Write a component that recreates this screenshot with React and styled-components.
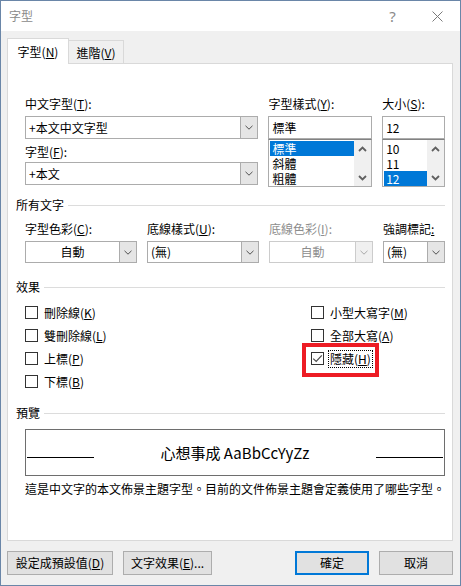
import React from 'react';
import styled, { createGlobalStyle, css } from 'styled-components';

const GlobalStyle = createGlobalStyle`
  html, body { margin: 0; padding: 0; background: #ffffff; }
  body {
    font-family: "Noto Sans CJK TC", "Noto Sans", sans-serif;
    font-size: 12px;
    color: #000;
  }
  * { box-sizing: border-box; }
`;

const Window = styled.div`
  width: 461px;
  height: 586px;
  border: 1px solid #6a86a8;
  background: #f0f0f0;
  display: flex;
  flex-direction: column;
`;

const TitleBar = styled.div`
  height: 30px;
  background: #fff;
  display: flex;
  align-items: center;
  padding-left: 8px;
`;

const Title = styled.div`
  color: #8a8a8a;
  font-size: 12px;
  line-height: 16px;
`;

const Captions = styled.div`
  margin-left: auto;
  display: flex;
  height: 100%;
`;

const CaptionButton = styled.div`
  width: 45px;
  height: 100%;
  display: flex;
  align-items: center;
  justify-content: center;
  color: #8a8a8a;
  font-family: "Noto Sans", sans-serif;
  font-size: 15px;
  line-height: 16px;
`;

const Body = styled.div`
  flex: 1;
  display: flex;
  flex-direction: column;
  padding: 7px 7px 0 6px;
`;

const TabStrip = styled.div`
  height: 25px;
  display: flex;
  align-items: flex-end;
  position: relative;
  z-index: 1;
`;

const Tab = styled.div`
  height: ${p => (p.$active ? '26px' : '23px')};
  width: ${p => (p.$active ? '62px' : '56px')};
  margin-bottom: ${p => (p.$active ? '-1px' : '0')};
  margin-left: ${p => (p.$active ? '0' : '-1px')};
  background: ${p => (p.$active ? '#ffffff' : '#f0f0f0')};
  border: 1px solid #d9d9d9;
  border-bottom: none;
  display: flex;
  align-items: center;
  justify-content: center;
  line-height: 16px;
  position: relative;
  z-index: ${p => (p.$active ? 2 : 1)};
  padding-top: ${p => (p.$active ? '0' : '1px')};
`;

const Key = styled.span`
  text-decoration: underline;
  text-underline-offset: 1px;
`;

const Panel = styled.div`
  height: 478px;
  background: #fff;
  border: 1px solid #d9d9d9;
  padding: 32px 7px 0 8px;
  display: flex;
  flex-direction: column;
`;

const Indented = styled.div`
  margin-left: 9px;
`;

const FontSection = styled(Indented)`
  display: flex;
  gap: 10px;
  height: 91px;
`;

const Column = styled.div`
  width: ${p => p.$w}px;
  display: flex;
  flex-direction: column;
`;

const Label = styled.div`
  height: 16px;
  line-height: 16px;
  white-space: nowrap;
  color: ${p => (p.$disabled ? '#8d8d8d' : '#000')};
  margin-top: ${p => p.$mt || 0}px;
`;

const fieldBase = css`
  height: ${p => p.$h || 23}px;
  border: 1px solid ${p => (p.$disabled ? '#cccccc' : '#acacac')};
  background: #fff;
  display: flex;
  align-items: stretch;
  line-height: 16px;
`;

const TextBox = styled.div`
  ${fieldBase};
  margin-top: ${p => p.$mt || 0}px;
  padding-left: 3px;
  align-items: center;
`;

const Combo = styled.div`
  ${fieldBase};
  margin-top: ${p => p.$mt || 0}px;
`;

const ComboText = styled.div`
  flex: 1;
  display: flex;
  align-items: center;
  justify-content: ${p => (p.$center ? 'center' : 'flex-start')};
  padding-left: ${p => (p.$center ? 0 : 3)}px;
  color: ${p => (p.$disabled ? '#8d8d8d' : '#000')};
  white-space: nowrap;
  overflow: hidden;
`;

const DropButton = styled.div`
  width: 17px;
  flex: none;
  background: ${p => (p.$disabled ? '#f0f0f0' : '#e5e5e5')};
  border-left: 1px solid ${p => (p.$disabled ? '#cccccc' : '#acacac')};
  display: flex;
  align-items: center;
  justify-content: center;
`;

const ListBox = styled.div`
  height: 48px;
  border: 1px solid #acacac;
  border-top-color: #828282;
  display: flex;
  padding: 1px 0 1px 1px;
`;

const ListItems = styled.div`
  flex: 1;
  display: flex;
  flex-direction: column;
`;

const ListItem = styled.div`
  height: 15px;
  line-height: 15px;
  padding-left: 2px;
  background: ${p => (p.$selected ? '#0078d7' : 'transparent')};
  color: ${p => (p.$selected ? '#fff' : '#000')};
`;

const ScrollBar = styled.div`
  width: 17px;
  margin: -1px 0;
  background: #f0f0f0;
  display: flex;
  flex-direction: column;
  justify-content: space-between;
  align-items: center;
  padding: 6px 0 5px;
`;

const SectionHeader = styled.div`
  display: flex;
  align-items: center;
  gap: 4px;
  height: 16px;
  line-height: 16px;
  margin-top: ${p => p.$mt}px;
  &::after {
    content: '';
    flex: 1;
    height: 1px;
    background: #dcdcdc;
  }
`;

const FieldRow = styled(Indented)`
  display: flex;
  gap: 10px;
  margin-top: 8px;
`;

const EffectsGrid = styled(Indented)`
  display: grid;
  grid-template-columns: 286px 1fr;
  margin-top: 6px;
`;

const EffectColumn = styled.div`
  display: flex;
  flex-direction: column;
`;

const CheckRow = styled.div`
  height: 23px;
  display: flex;
  align-items: center;
  gap: 5px;
  position: relative;
`;

const Box = styled.div`
  width: 13px;
  height: 13px;
  border: 1px solid #333;
  background: #fff;
  display: flex;
  align-items: center;
  justify-content: center;
  flex: none;
`;

const CheckLabel = styled.span`
  line-height: 16px;
  white-space: nowrap;
  padding: 0 1px;
  outline: ${p => (p.$focus ? '1px dotted #000' : 'none')};
  outline-offset: 0;
`;

const Highlight = styled.div`
  position: absolute;
  left: -9px;
  top: -4px;
  width: 77px;
  height: 34px;
  border: 4px solid #ed1c24;
  pointer-events: none;
`;

const PreviewBox = styled(Indented)`
  margin-top: 8px;
  height: 47px;
  border: 1px solid #6e6e6e;
  display: flex;
  align-items: center;
  padding: 0 1px;
`;

const PreviewLine = styled.div`
  width: 67px;
  height: 1px;
  background: #000;
  margin-top: 10px;
  flex: none;
`;

const PreviewText = styled.div`
  flex: 1;
  text-align: center;
  font-size: 15px;
  line-height: 18px;
  margin-top: 1px;
`;

const Description = styled(Indented)`
  margin-top: 5px;
  line-height: 16px;
  white-space: nowrap;
`;

const ButtonRow = styled.div`
  display: flex;
  gap: 10px;
  margin-top: 10px;
`;

const Button = styled.div`
  width: ${p => p.$w}px;
  height: 24px;
  border: ${p => (p.$default ? '2px solid #0078d7' : '1px solid #adadad')};
  background: #e1e1e1;
  display: flex;
  align-items: center;
  justify-content: center;
  line-height: 16px;
  white-space: nowrap;
  margin-left: ${p => (p.$push ? 'auto' : '0')};
`;

const ComboChevron = ({ disabled }) => (
  <svg width="8" height="5" viewBox="0 0 8 5">
    <path d="M0.5 0.8 L4 4.2 L7.5 0.8" fill="none" stroke={disabled ? '#a8a8a8' : '#505050'} strokeWidth="1" />
  </svg>
);

const ScrollArrow = ({ up }) => (
  <svg width="9" height="6" viewBox="0 0 9 6">
    <path
      d={up ? 'M1 5 L4.5 1.5 L8 5' : 'M1 1 L4.5 4.5 L8 1'}
      fill="none"
      stroke="#606060"
      strokeWidth="1.8"
    />
  </svg>
);

const DropCombo = ({ children, center, disabled, h, mt }) => (
  <Combo $disabled={disabled} $h={h} $mt={mt}>
    <ComboText $center={center} $disabled={disabled}>{children}</ComboText>
    <DropButton $disabled={disabled}>
      <ComboChevron disabled={disabled} />
    </DropButton>
  </Combo>
);

const List = ({ items, selected }) => (
  <ListBox>
    <ListItems>
      {items.map(it => (
        <ListItem key={it} $selected={it === selected}>{it}</ListItem>
      ))}
    </ListItems>
    <ScrollBar>
      <ScrollArrow up />
      <ScrollArrow />
    </ScrollBar>
  </ListBox>
);

const Check = ({ checked, label, k, focus, highlight }) => (
  <CheckRow>
    <Box>
      {checked && (
        <svg width="11" height="11" viewBox="0 0 11 11">
          <path d="M1.2 5.6 L4.2 8.4 L9.8 2.4" fill="none" stroke="#4a4a4a" strokeWidth="1.2" />
        </svg>
      )}
    </Box>
    <CheckLabel $focus={focus}>
      {label}(<Key>{k}</Key>)
    </CheckLabel>
    {highlight && <Highlight />}
  </CheckRow>
);

export default function App() {
  return (
    <>
      <GlobalStyle />
      <Window>
        <TitleBar>
          <Title>字型</Title>
          <Captions>
            <CaptionButton>?</CaptionButton>
            <CaptionButton>
              <svg width="11" height="11" viewBox="0 0 11 11">
                <path d="M0.5 0.5 L10.5 10.5 M10.5 0.5 L0.5 10.5" stroke="#7a7a7a" strokeWidth="1" />
              </svg>
            </CaptionButton>
          </Captions>
        </TitleBar>
        <Body>
          <TabStrip>
            <Tab $active>字型(<Key>N</Key>)</Tab>
            <Tab>進階(<Key>V</Key>)</Tab>
          </TabStrip>
          <Panel>
            <FontSection>
              <Column $w={234}>
                <Label>中文字型(<Key>T</Key>):</Label>
                <DropCombo mt={4}>+本文中文字型</DropCombo>
                <Label $mt={5}>字型(<Key>F</Key>):</Label>
                <DropCombo mt={2}>+本文</DropCombo>
              </Column>
              <Column $w={104}>
                <Label>字型樣式(<Key>Y</Key>):</Label>
                <TextBox $mt={4}>標準</TextBox>
                <List items={['標準', '斜體', '粗體']} selected="標準" />
              </Column>
              <Column $w={63}>
                <Label>大小(<Key>S</Key>):</Label>
                <TextBox $mt={4}>12</TextBox>
                <List items={['10', '11', '12']} selected="12" />
              </Column>
            </FontSection>

            <SectionHeader $mt={10}>所有文字</SectionHeader>
            <FieldRow>
              <Column $w={112}>
                <Label>字型色彩(<Key>C</Key>):</Label>
                <DropCombo center h={22} mt={4}>自動</DropCombo>
              </Column>
              <Column $w={112}>
                <Label>底線樣式(<Key>U</Key>):</Label>
                <DropCombo h={22} mt={4}>(無)</DropCombo>
              </Column>
              <Column $w={104}>
                <Label $disabled>底線色彩(<Key>I</Key>):</Label>
                <DropCombo center disabled h={22} mt={4}>自動</DropCombo>
              </Column>
              <Column $w={62}>
                <Label>強調標記<Key>:</Key></Label>
                <DropCombo h={22} mt={4}>(無)</DropCombo>
              </Column>
            </FieldRow>

            <SectionHeader $mt={16}>效果</SectionHeader>
            <EffectsGrid>
              <EffectColumn>
                <Check label="刪除線" k="K" />
                <Check label="雙刪除線" k="L" />
                <Check label="上標" k="P" />
                <Check label="下標" k="B" />
              </EffectColumn>
              <EffectColumn>
                <Check label="小型大寫字" k="M" />
                <Check label="全部大寫" k="A" />
                <Check label="隱藏" k="H" checked focus highlight />
              </EffectColumn>
            </EffectsGrid>

            <SectionHeader $mt={12}>預覽</SectionHeader>
            <PreviewBox>
              <PreviewLine />
              <PreviewText>心想事成 AaBbCcYyZz</PreviewText>
              <PreviewLine />
            </PreviewBox>
            <Description>這是中文字的本文佈景主題字型。目前的文件佈景主題會定義使用了哪些字型。</Description>
          </Panel>
          <ButtonRow>
            <Button $w={106}>設定成預設值(<Key>D</Key>)</Button>
            <Button $w={89}>文字效果(<Key>E</Key>)...</Button>
            <Button $w={74} $default $push>確定</Button>
            <Button $w={74}>取消</Button>
          </ButtonRow>
        </Body>
      </Window>
    </>
  );
}
